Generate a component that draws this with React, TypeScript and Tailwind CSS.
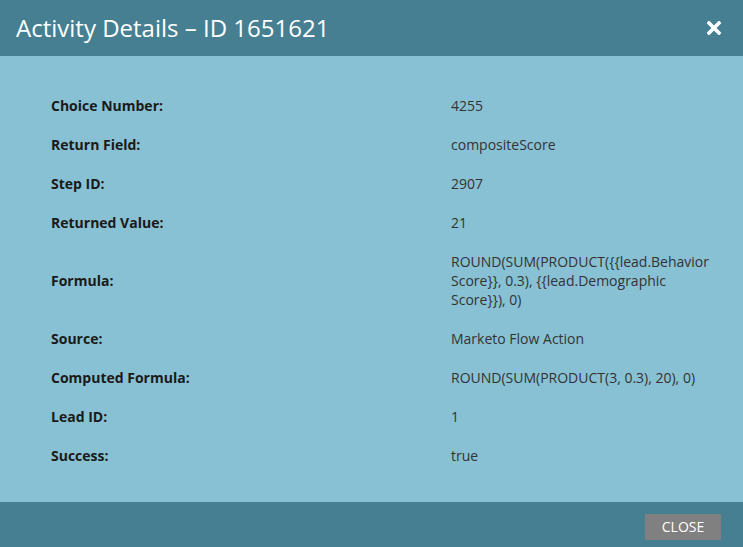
import React from 'react'

const rows: { label: string; value: React.ReactNode }[] = [
  { label: 'Choice Number:', value: '4255' },
  { label: 'Return Field:', value: 'compositeScore' },
  { label: 'Step ID:', value: '2907' },
  { label: 'Returned Value:', value: '21' },
  {
    label: 'Formula:',
    value: 'ROUND(SUM(PRODUCT({{lead.Behavior Score}}, 0.3), {{lead.Demographic Score}}), 0)',
  },
  { label: 'Source:', value: 'Marketo Flow Action' },
  { label: 'Computed Formula:', value: 'ROUND(SUM(PRODUCT(3, 0.3), 20), 0)' },
  { label: 'Lead ID:', value: '1' },
  { label: 'Success:', value: 'true' },
]

export default function App() {
  return (
    <div className="w-[743px] h-[547px] flex flex-col bg-[#88c1d3] font-['Open_Sans',sans-serif]">
      <div className="h-[56px] shrink-0 bg-[#467f92] flex items-center justify-between pl-4 pr-[22px]">
        <h1 className="text-[24px] text-white leading-none">Activity Details – ID 1651621</h1>
        <button className="text-white">
          <svg width="14" height="14" viewBox="0 0 14 14">
            <path d="M2 2 L12 12 M12 2 L2 12" stroke="white" strokeWidth="3.6" strokeLinecap="square" />
          </svg>
        </button>
      </div>
      <div className="flex-1 pt-[30px] pl-[51px] pr-6">
        {rows.map(r => (
          <div key={r.label} className="flex items-center py-[10px] text-[14px] leading-[19px]">
            <div className="w-[400px] shrink-0 font-bold text-[#1a1a1a]">{r.label}</div>
            <div className="w-[260px] text-[#333]">{r.value}</div>
          </div>
        ))}
      </div>
      <div className="h-[45px] shrink-0 bg-[#467f92] flex items-end justify-end pr-[22px] pb-[7px]">
        <button className="w-[76px] h-[26px] bg-[#808080] text-white text-[14px] leading-none">CLOSE</button>
      </div>
    </div>
  )
}
